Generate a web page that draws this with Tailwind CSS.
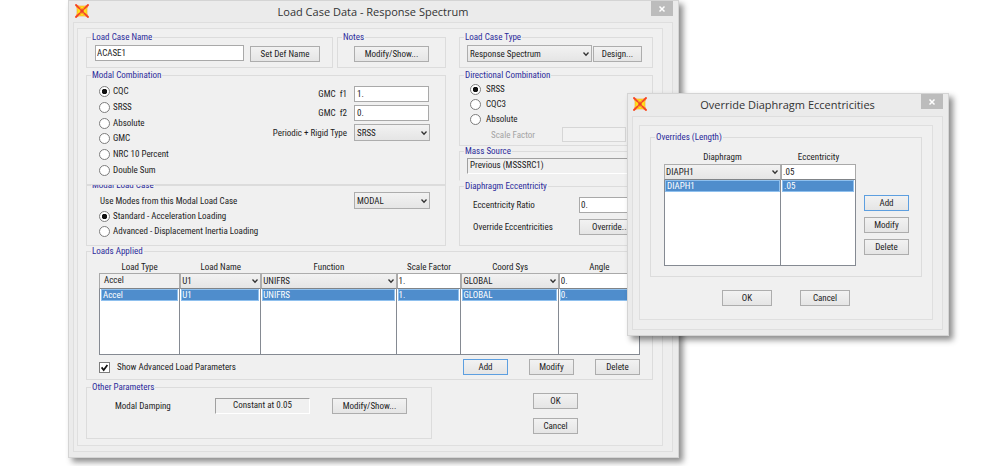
<!DOCTYPE html>
<html lang="en">
<head>
<meta charset="utf-8">
<title>Load Case Data - Response Spectrum</title>
<script src="https://cdn.jsdelivr.net/npm/@tailwindcss/browser@4"></script>
</head>
<body class="relative min-h-screen overflow-hidden bg-white font-['Roboto_Condensed','Roboto','Liberation_Sans',sans-serif] text-[9px] leading-[10px] text-[#1c1c1c]">
<svg class="hidden">
  <symbol id="app" viewBox="0 0 14 14">
    <path d="M.5 .5L4 2H10L13.5 .5L12 4.5V9.5L13.5 13.5L10 12H4L.5 13.5L2 9.5V4.5Z" fill="#ffe01a"/>
    <path d="M.5 .5L4 2H10L13.5 .5L12 4.5V9.5L13.5 13.5L10 12H4L.5 13.5L2 9.5V4.5Z" fill="none" stroke="#fb9a2c" stroke-width=".6"/>
    <path d="M.5 .5L5 5M13.5 .5L9 5M.5 13.5L5 9M13.5 13.5L9 9" stroke="#f5382c" stroke-width="1.7"/>
    <path d="M5 3.2L7 5L9 3.2M5 10.8L7 9L9 10.8" stroke="#f8892a" fill="none" stroke-width=".7"/>
    <path d="M5 5L7 5.8L9 5L8.2 7L9 9L7 8.2L5 9L5.8 7Z" fill="#ee3d2c" stroke="#ee3d2c" stroke-width=".6"/>
  </symbol>
  <symbol id="x" viewBox="0 0 8 8"><path d="M1.5 1.5L6.5 6.5M6.5 1.5L1.5 6.5" stroke="#fff" stroke-width="1.5"/></symbol>
  <symbol id="v" viewBox="0 0 8 6"><path d="M1.5 1.5L4 4.3L6.5 1.5" fill="none" stroke="#333" stroke-width="1.3"/></symbol>
  <symbol id="tick" viewBox="0 0 11 11"><path d="M2.6 5.4L4.7 8L8.4 3" fill="none" stroke="#111" stroke-width="1.7"/></symbol>
</svg>

<main class="absolute top-0 left-[6.8%] w-[61.1%] border border-[#d4d4d4] bg-[#ebebeb] pr-[5px] pb-[5px] pl-1 shadow-[4px_4px_6px_rgba(0,0,0,0.45)]">
  <header class="grid h-[21px] grid-cols-[22px_1fr_22px] items-start">
    <svg class="mt-[3px] ml-[2px] size-[14px]"><use href="#app"/></svg>
    <h1 class="text-center font-['Open_Sans','Noto_Sans',sans-serif] text-[11px] leading-[21px] text-[#333]">Load Case Data - Response Spectrum</h1>
    <button aria-label="Close" class="flex h-[15px] items-center justify-center bg-[#bcbcbc]"><svg class="size-2"><use href="#x"/></svg></button>
  </header>
  <div class="border border-[#dedede] bg-[#eeeeee] pt-[5px] pr-[9px] pb-[5px] pl-[3px]">
    <div class="border border-[#dfdfdf] bg-[#f0f0f0] pt-[3px] pr-[9px] pb-[6px] pl-2">
      <div class="grid grid-cols-[minmax(0,360fr)_minmax(0,194fr)] gap-x-[13px]">
        <div class="flex flex-col">
          <div class="mb-[2px] grid grid-cols-[minmax(0,247fr)_minmax(0,109fr)] gap-x-1">
            <fieldset class="min-w-0 border border-[#dcdcdc] pb-[5px]">
              <legend class="ml-1 px-px text-[#2b2b9b]">Load Case Name</legend>
              <div class="flex items-start gap-[6px] pt-[3px] pr-3 pl-2">
                <input aria-label="Load Case Name" value="ACASE1" class="h-4 min-w-0 flex-1 border border-[#a9a9a9] bg-white px-px">
                <button class="mt-px h-4 w-[70px] border border-[#adadad] bg-linear-to-b from-[#f2f2f2] to-[#e5e5e5]">Set Def Name</button>
              </div>
            </fieldset>
            <fieldset class="min-w-0 border border-[#dcdcdc] pb-[5px]">
              <legend class="ml-1 px-px text-[#2b2b9b]">Notes</legend>
              <div class="pt-1 pr-4 pl-4">
                <button class="block h-4 w-full border border-[#adadad] bg-linear-to-b from-[#f2f2f2] to-[#e5e5e5]">Modify/Show...</button>
              </div>
            </fieldset>
          </div>
          <fieldset class="relative z-10 min-w-0 border border-[#dcdcdc] bg-[#f0f0f0] pb-[6px]">
            <legend class="ml-1 px-px text-[#2b2b9b]">Modal Combination</legend>
            <div class="flex justify-between pt-1 pr-[15px] pl-3">
              <div class="flex h-[94px] flex-col justify-between">
                <label class="flex items-center gap-[3px] leading-[15px]"><input type="radio" name="mc" checked class="size-[11px] appearance-none rounded-full border border-[#7d7d7d] bg-white checked:bg-[radial-gradient(circle,#111_2.5px,#fff_3px)]">CQC</label>
                <label class="flex items-center gap-[3px] leading-[15px]"><input type="radio" name="mc" class="size-[11px] appearance-none rounded-full border border-[#7d7d7d] bg-white checked:bg-[radial-gradient(circle,#111_2.5px,#fff_3px)]">SRSS</label>
                <label class="flex items-center gap-[3px] leading-[15px]"><input type="radio" name="mc" class="size-[11px] appearance-none rounded-full border border-[#7d7d7d] bg-white checked:bg-[radial-gradient(circle,#111_2.5px,#fff_3px)]">Absolute</label>
                <label class="flex items-center gap-[3px] leading-[15px]"><input type="radio" name="mc" class="size-[11px] appearance-none rounded-full border border-[#7d7d7d] bg-white checked:bg-[radial-gradient(circle,#111_2.5px,#fff_3px)]">GMC</label>
                <label class="flex items-center gap-[3px] leading-[15px]"><input type="radio" name="mc" class="size-[11px] appearance-none rounded-full border border-[#7d7d7d] bg-white checked:bg-[radial-gradient(circle,#111_2.5px,#fff_3px)]">NRC 10 Percent</label>
                <label class="flex items-center gap-[3px] leading-[15px]"><input type="radio" name="mc" class="size-[11px] appearance-none rounded-full border border-[#7d7d7d] bg-white checked:bg-[radial-gradient(circle,#111_2.5px,#fff_3px)]">Double Sum</label>
              </div>
              <div class="grid grid-cols-[auto_76px] content-start items-center gap-x-[7px] gap-y-[3px] pt-[2px] text-right">
                <label for="f1" class="whitespace-pre">GMC  f1</label>
                <input id="f1" value="1." class="h-4 w-[75px] border border-[#a9a9a9] bg-white px-[2px]">
                <label for="f2" class="whitespace-pre">GMC  f2</label>
                <input id="f2" value="0." class="h-4 w-[75px] border border-[#a9a9a9] bg-white px-[2px]">
                <label for="prt">Periodic + Rigid Type</label>
                <div class="grid items-center">
                  <select id="prt" class="col-start-1 row-start-1 h-[17px] w-full appearance-none border border-[#adadad] bg-linear-to-b from-[#f2f2f2] to-[#e5e5e5] px-[2px]"><option>SRSS</option></select>
                  <svg class="pointer-events-none col-start-1 row-start-1 mr-[2px] h-[6px] w-2 justify-self-end"><use href="#v"/></svg>
                </div>
              </div>
            </div>
          </fieldset>
          <fieldset class="-mt-[5px] min-w-0 border border-[#dcdcdc] pb-[6px]">
            <legend class="ml-1 px-px text-[#2b2b9b]">Modal Load Case</legend>
            <div class="pt-[2px] pr-[15px] pl-3">
              <div class="flex items-center justify-between">
                <label for="mlc" class="pl-px">Use Modes from this Modal Load Case</label>
                <div class="grid w-[76px] items-center">
                  <select id="mlc" class="col-start-1 row-start-1 h-[17px] w-full appearance-none border border-[#adadad] bg-linear-to-b from-[#f2f2f2] to-[#e5e5e5] px-[2px]"><option>MODAL</option></select>
                  <svg class="pointer-events-none col-start-1 row-start-1 mr-[2px] h-[6px] w-2 justify-self-end"><use href="#v"/></svg>
                </div>
              </div>
              <label class="flex items-center gap-[3px] leading-[15px]"><input type="radio" name="ml" checked class="size-[11px] appearance-none rounded-full border border-[#7d7d7d] bg-white checked:bg-[radial-gradient(circle,#111_2.5px,#fff_3px)]">Standard - Acceleration Loading</label>
              <label class="flex items-center gap-[3px] leading-[15px]"><input type="radio" name="ml" class="size-[11px] appearance-none rounded-full border border-[#7d7d7d] bg-white checked:bg-[radial-gradient(circle,#111_2.5px,#fff_3px)]">Advanced - Displacement Inertia Loading</label>
            </div>
          </fieldset>
        </div>

        <div class="flex flex-col">
          <fieldset class="mb-[2px] min-w-0 border border-[#dcdcdc] pb-[5px]">
            <legend class="ml-1 px-px text-[#2b2b9b]">Load Case Type</legend>
            <div class="flex items-start gap-px pt-[3px] pr-[10px] pl-[7px]">
              <div class="grid min-w-0 flex-1 items-center">
                <select aria-label="Load Case Type" class="col-start-1 row-start-1 h-[17px] w-full appearance-none border border-[#adadad] bg-linear-to-b from-[#f2f2f2] to-[#e5e5e5] px-[2px]"><option>Response Spectrum</option></select>
                <svg class="pointer-events-none col-start-1 row-start-1 mr-[2px] h-[6px] w-2 justify-self-end"><use href="#v"/></svg>
              </div>
              <button class="mt-px h-4 w-[49px] border border-[#adadad] bg-linear-to-b from-[#f2f2f2] to-[#e5e5e5]">Design...</button>
            </div>
          </fieldset>
          <fieldset class="min-w-0 border border-[#dcdcdc] pb-[3px]">
            <legend class="ml-1 px-px text-[#2b2b9b]">Directional Combination</legend>
            <div class="pt-[2px] pr-[26px] pl-[10px]">
              <label class="flex items-center gap-[5px] leading-[15px]"><input type="radio" name="dc" checked class="size-[11px] appearance-none rounded-full border border-[#7d7d7d] bg-white checked:bg-[radial-gradient(circle,#111_2.5px,#fff_3px)]">SRSS</label>
              <label class="flex items-center gap-[5px] leading-[15px]"><input type="radio" name="dc" class="size-[11px] appearance-none rounded-full border border-[#7d7d7d] bg-white checked:bg-[radial-gradient(circle,#111_2.5px,#fff_3px)]">CQC3</label>
              <label class="flex items-center gap-[5px] leading-[15px]"><input type="radio" name="dc" class="size-[11px] appearance-none rounded-full border border-[#7d7d7d] bg-white checked:bg-[radial-gradient(circle,#111_2.5px,#fff_3px)]">Absolute</label>
              <div class="flex items-center justify-between pl-[21px] text-[#a3a3a3]">
                <label for="sf">Scale Factor</label>
                <input id="sf" disabled class="h-[15px] w-16 border border-[#d6d6d6] bg-[#f2f2f2]">
              </div>
            </div>
          </fieldset>
          <fieldset class="min-w-0 border border-[#dcdcdc] border-b-transparent pb-[6px]">
            <legend class="ml-1 px-px text-[#2b2b9b]">Mass Source</legend>
            <div class="pt-[2px] pr-2 pl-[7px]">
              <output class="block h-4 border border-t-[#a0a0a0] border-r-white border-b-white border-l-[#a0a0a0] px-[2px] leading-[12px]">Previous (MSSSRC1)</output>
            </div>
          </fieldset>
          <fieldset class="min-w-0 border border-[#dcdcdc] pb-[10px]">
            <legend class="ml-1 px-px text-[#2b2b9b]">Diaphragm Eccentricity</legend>
            <div class="grid grid-cols-[1fr_63px] items-center gap-y-[6px] pt-[6px] pr-[10px] pl-[13px]">
              <label for="er">Eccentricity Ratio</label>
              <input id="er" value="0." class="h-4 w-full border border-[#a9a9a9] bg-white px-px">
              <span>Override Eccentricities</span>
              <button class="h-4 border border-[#adadad] bg-linear-to-b from-[#f2f2f2] to-[#e5e5e5]">Override...</button>
            </div>
          </fieldset>
        </div>
      </div>

      <fieldset class="mb-[2px] min-w-0 border border-[#dcdcdc] pb-1">
        <legend class="ml-1 px-px text-[#2b2b9b]">Loads Applied</legend>
        <div class="pt-1 pr-3 pl-3">
          <table class="w-full table-fixed border-separate border-spacing-0">
            <colgroup><col class="w-[15%]"><col class="w-[15%]"><col class="w-[25%]"><col class="w-[12%]"><col class="w-[18%]"><col class="w-[15%]"></colgroup>
            <thead><tr class="h-[13px]"><th class="font-normal">Load Type</th><th class="font-normal">Load Name</th><th class="font-normal">Function</th><th class="font-normal">Scale Factor</th><th class="font-normal">Coord Sys</th><th class="font-normal">Angle</th></tr></thead>
            <tbody>
              <tr class="h-4">
                <td class="border border-[#a9a9a9] border-b-[#808488] px-1 pb-[3px]">Accel</td>
                <td><div class="grid items-center"><select aria-label="Load Name" class="col-start-1 row-start-1 h-4 w-full appearance-none border border-[#adadad] border-b-[#808488] bg-linear-to-b from-[#f2f2f2] to-[#e5e5e5] px-px"><option>U1</option></select><svg class="pointer-events-none col-start-1 row-start-1 mr-[2px] h-[6px] w-2 justify-self-end"><use href="#v"/></svg></div></td>
                <td><div class="grid items-center"><select aria-label="Function" class="col-start-1 row-start-1 h-4 w-full appearance-none border border-[#adadad] border-b-[#808488] bg-linear-to-b from-[#f2f2f2] to-[#e5e5e5] px-px"><option>UNIFRS</option></select><svg class="pointer-events-none col-start-1 row-start-1 mr-[2px] h-[6px] w-2 justify-self-end"><use href="#v"/></svg></div></td>
                <td><input aria-label="Scale Factor" value="1." class="block h-4 w-full border border-[#a9a9a9] border-b-[#808488] bg-white px-px"></td>
                <td><div class="grid items-center"><select aria-label="Coord Sys" class="col-start-1 row-start-1 h-4 w-full appearance-none border border-[#adadad] border-b-[#808488] bg-linear-to-b from-[#f2f2f2] to-[#e5e5e5] px-px"><option>GLOBAL</option></select><svg class="pointer-events-none col-start-1 row-start-1 mr-[2px] h-[6px] w-2 justify-self-end"><use href="#v"/></svg></div></td>
                <td><input aria-label="Angle" value="0." class="block h-4 w-full border border-[#a9a9a9] border-b-[#808488] bg-white px-px"></td>
              </tr>
              <tr class="h-3 bg-white text-white">
                <td class="border-x border-[#858a92] px-px"><div class="h-3 border border-[#8fc0ee] bg-[#4f8dcc] px-px">Accel</div></td>
                <td class="border-r border-[#858a92] px-px"><div class="h-3 border border-[#8fc0ee] bg-[#4f8dcc]">U1</div></td>
                <td class="border-r border-[#858a92] px-px"><div class="h-3 border border-[#8fc0ee] bg-[#4f8dcc]">UNIFRS</div></td>
                <td class="border-r border-[#858a92] px-px"><div class="h-3 border border-[#8fc0ee] bg-[#4f8dcc]">1.</div></td>
                <td class="border-r border-[#858a92] px-px"><div class="h-3 border border-[#8fc0ee] bg-[#4f8dcc]">GLOBAL</div></td>
                <td class="border-r border-[#858a92] px-px"><div class="h-3 border border-[#8fc0ee] bg-[#4f8dcc]">0.</div></td>
              </tr>
              <tr class="h-[54px] bg-white">
                <td class="border border-t-0 border-[#858a92]"></td><td class="border-r border-b border-[#858a92]"></td><td class="border-r border-b border-[#858a92]"></td><td class="border-r border-b border-[#858a92]"></td><td class="border-r border-b border-[#858a92]"></td><td class="border-r border-b border-[#858a92]"></td>
              </tr>
            </tbody>
          </table>
          <div class="flex items-center justify-between pt-1">
            <label class="flex items-center gap-[7px]">
              <span class="grid"><input type="checkbox" checked class="peer col-start-1 row-start-1 size-[11px] appearance-none border border-[#7d7d7d] bg-white"><svg class="pointer-events-none invisible col-start-1 row-start-1 size-[11px] peer-checked:visible"><use href="#tick"/></svg></span>
              Show Advanced Load Parameters
            </label>
            <div class="flex gap-[21px]">
              <button class="h-4 w-[45px] border border-[#5d9fe0] bg-linear-to-b from-[#f2f2f2] to-[#e5e5e5]">Add</button>
              <button class="h-4 w-[45px] border border-[#adadad] bg-linear-to-b from-[#f2f2f2] to-[#e5e5e5]">Modify</button>
              <button class="h-4 w-[45px] border border-[#adadad] bg-linear-to-b from-[#f2f2f2] to-[#e5e5e5]">Delete</button>
            </div>
          </div>
        </div>
      </fieldset>

      <div class="grid grid-cols-[minmax(0,346fr)_minmax(0,221fr)]">
        <fieldset class="min-w-0 border border-[#dcdcdc] pb-[23px]">
          <legend class="ml-1 px-px text-[#2b2b9b]">Other Parameters</legend>
          <div class="flex items-start justify-between pt-[6px] pr-6 pl-7">
            <span class="leading-[17px]">Modal Damping</span>
            <div class="flex gap-[22px]">
              <output class="block h-4 w-[95px] border border-t-[#a0a0a0] border-r-white border-b-white border-l-[#a0a0a0] text-center leading-[12px]">Constant at 0.05</output>
              <button class="h-4 w-[75px] border border-[#adadad] bg-linear-to-b from-[#f2f2f2] to-[#e5e5e5]">Modify/Show...</button>
            </div>
          </div>
        </fieldset>
        <div class="flex flex-col items-center gap-[9px] pt-[11px] pl-[26px]">
          <button class="h-4 w-[45px] border border-[#adadad] bg-linear-to-b from-[#f2f2f2] to-[#e5e5e5]">OK</button>
          <button class="h-4 w-[45px] border border-[#adadad] bg-linear-to-b from-[#f2f2f2] to-[#e5e5e5]">Cancel</button>
        </div>
      </div>
    </div>
  </div>
</main>

<section role="dialog" aria-label="Override Diaphragm Eccentricities" class="absolute top-[93px] left-[62.7%] z-20 w-[32.2%] border border-[#d4d4d4] bg-[#ebebeb] pr-[5px] pb-[5px] pl-1 shadow-[4px_4px_6px_rgba(0,0,0,0.45)]">
  <header class="grid h-[22px] grid-cols-[22px_1fr_22px] items-start">
    <svg class="mt-[3px] ml-px size-[14px]"><use href="#app"/></svg>
    <h2 class="text-center font-['Open_Sans','Noto_Sans',sans-serif] text-[11px] leading-[21px] text-[#333]">Override Diaphragm Eccentricities</h2>
    <button aria-label="Close" class="flex h-[15px] items-center justify-center bg-[#bcbcbc]"><svg class="size-2"><use href="#x"/></svg></button>
  </header>
  <div class="border border-[#dedede] bg-[#eeeeee] pt-2 pr-[9px] pb-[9px] pl-[6px]">
    <div class="border border-[#dfdfdf] bg-[#f0f0f0] px-[10px] pt-[6px] pb-[13px]">
      <fieldset class="min-w-0 border border-[#dcdcdc] pb-[10px]">
        <legend class="ml-1 px-px text-[#2b2b9b]">Overrides (Length)</legend>
        <div class="flex items-start gap-2 pt-[7px] pr-3 pl-[13px]">
          <table class="min-w-0 flex-1 table-fixed border-separate border-spacing-0">
            <colgroup><col class="w-[61%]"><col class="w-[39%]"></colgroup>
            <thead><tr class="h-[15px]"><th class="font-normal">Diaphragm</th><th class="font-normal">Eccentricity</th></tr></thead>
            <tbody>
              <tr class="h-4">
                <td><div class="grid items-center"><select aria-label="Diaphragm" class="col-start-1 row-start-1 h-4 w-full appearance-none border border-[#adadad] border-b-[#808488] bg-linear-to-b from-[#f2f2f2] to-[#e5e5e5] px-px"><option>DIAPH1</option></select><svg class="pointer-events-none col-start-1 row-start-1 mr-[2px] h-[6px] w-2 justify-self-end"><use href="#v"/></svg></div></td>
                <td><input aria-label="Eccentricity" value=".05" class="block h-4 w-full border border-[#a9a9a9] border-b-[#808488] bg-white px-px"></td>
              </tr>
              <tr class="h-3 bg-white text-white">
                <td class="border-x border-[#858a92]"><div class="h-3 border border-[#8fc0ee] bg-[#4f8dcc] px-px">DIAPH1</div></td>
                <td class="border-r border-[#858a92] px-px"><div class="h-3 border border-[#8fc0ee] bg-[#4f8dcc] px-px">.05</div></td>
              </tr>
              <tr class="h-[74px] bg-white"><td class="border border-t-0 border-[#858a92]"></td><td class="border-r border-b border-[#858a92]"></td></tr>
            </tbody>
          </table>
          <div class="flex flex-col gap-[6px] pt-[46px]">
            <button class="h-4 w-[45px] border border-[#5d9fe0] bg-linear-to-b from-[#f2f2f2] to-[#e5e5e5]">Add</button>
            <button class="h-4 w-[45px] border border-[#adadad] bg-linear-to-b from-[#f2f2f2] to-[#e5e5e5]">Modify</button>
            <button class="h-4 w-[45px] border border-[#adadad] bg-linear-to-b from-[#f2f2f2] to-[#e5e5e5]">Delete</button>
          </div>
        </div>
      </fieldset>
      <div class="flex justify-center gap-7 pt-[13px]">
        <button class="h-4 w-[50px] border border-[#adadad] bg-linear-to-b from-[#f2f2f2] to-[#e5e5e5]">OK</button>
        <button class="h-4 w-[50px] border border-[#adadad] bg-linear-to-b from-[#f2f2f2] to-[#e5e5e5]">Cancel</button>
      </div>
    </div>
  </div>
</section>
</body>
</html>
